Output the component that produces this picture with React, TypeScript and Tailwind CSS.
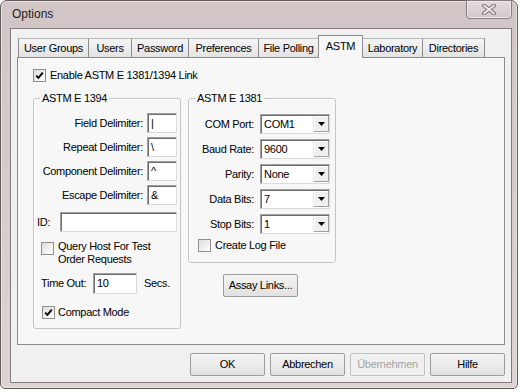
import React from "react";

const font = "font-['Liberation_Sans',Arial,sans-serif]";

// sunken 3D edit box
function Field({ value, className }: { value: string; className: string }) {
  return (
    <div
      className={`h-[20px] border border-t-[#a0a0a0] border-l-[#a0a0a0] border-r-[#dadada] border-b-[#dadada] shadow-[inset_1px_1px_0_#6e6e6e] bg-white text-[11px] tracking-[-0.3px] text-black pl-[3px] flex items-center leading-none ${className}`}
    >
      {value}
    </div>
  );
}

function Combo({ value }: { value: string }) {
  return (
    <div className="h-[20px] w-[70px] border border-t-[#a0a0a0] border-l-[#a0a0a0] border-r-[#dadada] border-b-[#dadada] shadow-[inset_1px_1px_0_#6e6e6e] bg-white flex items-stretch">
      <div className="flex-1 flex items-center pl-[3px] text-[11px] tracking-[-0.3px] text-black leading-none">
        {value}
      </div>
      {/* dropdown button */}
      <div className="w-[16px] my-[1px] mr-[0px] bg-[#f0f0f0] border-l border-[#e8e8e8] shadow-[inset_-1px_-1px_0_#a0a0a0,inset_1px_1px_0_#ffffff] flex items-center justify-center">
        <svg width="7" height="4" viewBox="0 0 7 4">
          <path d="M0 0 H7 L3.5 4 Z" fill="#000" />
        </svg>
      </div>
    </div>
  );
}

function Check({ checked }: { checked?: boolean }) {
  return (
    <span className="w-[13px] h-[13px] shrink-0 border border-[#8e8f8f] bg-gradient-to-br from-[#dedede] to-[#ffffff] flex items-center justify-center">
      {checked && (
        <svg width="9" height="9" viewBox="0 0 9 9">
          <path d="M1.2 4.6 L3.4 6.9 L7.8 1.6" fill="none" stroke="#000" strokeWidth="1.9" />
        </svg>
      )}
    </span>
  );
}

function Group({ title, className, children }: { title: string; className: string; children: React.ReactNode }) {
  return (
    <div className={`relative border border-[#c5c5c5] rounded-[3px] shadow-[inset_1px_1px_0_#ffffff] ${className}`}>
      <span className="absolute -top-[7px] left-[6px] px-[2px] bg-[#f7f7f7] text-[11px] tracking-[-0.3px] leading-[13px] text-black">
        {title}
      </span>
      {children}
    </div>
  );
}

function Button({ label, disabled, className }: { label: string; disabled?: boolean; className?: string }) {
  return (
    <div
      className={`w-[75px] h-[23px] rounded-[2px] border flex items-center justify-center text-[11px] tracking-[-0.3px] ${
        disabled
          ? "border-[#c2c2c2] bg-[#f0f0f0] text-[#a3a3a3]"
          : "border-[#9c9c9c] bg-gradient-to-b from-[#f4f4f4] to-[#e1e1e1] text-black"
      } ${className ?? ""}`}
    >
      {label}
    </div>
  );
}

const tabs = [
  { label: "User Groups", w: "w-[71px]", first: true },
  { label: "Users", w: "w-[43px]" },
  { label: "Password", w: "w-[57px]" },
  { label: "Preferences", w: "w-[70px]" },
  { label: "File Polling", w: "w-[60px]" },
  { label: "ASTM", w: "w-[45px]", active: true },
  { label: "Laboratory", w: "w-[60px]" },
  { label: "Directories", w: "w-[62px]" },
];

const delimiters = [
  { label: "Field Delimiter:", value: "|" },
  { label: "Repeat Delimiter:", value: "\\" },
  { label: "Component Delimiter:", value: "^" },
  { label: "Escape Delimiter:", value: "&" },
];

const serial = [
  { label: "COM Port:", value: "COM1" },
  { label: "Baud Rate:", value: "9600" },
  { label: "Parity:", value: "None" },
  { label: "Data Bits:", value: "7" },
  { label: "Stop Bits:", value: "1" },
];

export default function App() {
  return (
    <div className={`w-[523px] h-[392px] bg-white ${font}`}>
      {/* window frame */}
      <div className="w-[518px] h-[389px] rounded-t-[7px] rounded-b-[5px] border border-[#645b5b] bg-gradient-to-b from-[#d1c5c5] to-[#dcd3d3] shadow-[inset_0_0_0_1px_#ebe5e5] flex flex-col">
        {/* title bar */}
        <div className="h-[27px] flex items-start">
          <span className="pl-[11px] pt-[6px] text-[12px] leading-[14px] text-[#1e1e1e]">Options</span>
          <div className="ml-auto mr-[5px] -mt-px w-[46px] h-[19px] rounded-b-[4px] border border-[#8a7d7d] bg-gradient-to-b from-[#e4dcdc] to-[#d3c8c8] shadow-[inset_0_0_0_1px_#eee8e8] flex items-center justify-center">
            <svg width="14" height="11" viewBox="0 0 14 11">
              <path d="M2 1.5 L12 9.5 M12 1.5 L2 9.5" stroke="#7d7474" strokeWidth="4" strokeLinecap="round" />
              <path d="M2 1.5 L12 9.5 M12 1.5 L2 9.5" stroke="#efeaea" strokeWidth="2" strokeLinecap="round" />
            </svg>
          </div>
        </div>

        {/* client area */}
        <div className="ml-[9px] mr-[5px] h-[355px] border border-[#857b7b] bg-[#f0f0f0] flex flex-col">
          {/* tab strip */}
          <div className="mt-[6px] h-[22px] pl-[7px] flex items-end">
            {tabs.map((t) =>
              t.active ? (
                <div
                  key={t.label}
                  className={`${t.w} relative z-10 -ml-px -mb-px h-[23px] border border-b-0 border-[#8c8c8c] bg-[#f7f7f7] flex items-center justify-center pb-[2px] text-[11px] tracking-[-0.3px] text-black`}
                >
                  {t.label}
                </div>
              ) : (
                <div
                  key={t.label}
                  className={`${t.w} h-[19px] border-t border-r border-t-[#b8b8b8] border-r-[#8c8c8c] ${
                    t.first ? "border-l border-l-[#8c8c8c]" : ""
                  } bg-gradient-to-b from-[#f5f5f5] to-[#e3e3e3] flex items-center justify-center text-[11px] tracking-[-0.3px] text-black`}
                >
                  {t.label}
                </div>
              )
            )}
          </div>

          {/* tab page */}
          <div className="ml-[6px] w-[488px] h-[288px] border border-[#8c8c8c] bg-[#f7f7f7] pl-[15px] pt-[11px]">
            <div className="flex items-center gap-[4px] h-[13px] text-[11px] tracking-[-0.3px] text-black">
              <Check checked />
              <span>Enable ASTM E 1381/1394 Link</span>
            </div>

            <div className="mt-[16px] flex items-start">
              {/* ASTM E 1394 */}
              <Group title="ASTM E 1394" className="w-[148px] h-[231px] pt-[14px]">
                <div className="flex flex-col gap-[4px] pr-[3px]">
                  {delimiters.map((d) => (
                    <div key={d.label} className="h-[20px] flex items-center justify-end text-[11px] tracking-[-0.3px] text-black">
                      <span className="pr-[4px]">{d.label}</span>
                      <Field value={d.value} className="w-[30px]" />
                    </div>
                  ))}
                </div>

                <div className="mt-[7px] pl-[3px] h-[20px] flex items-center text-[11px] tracking-[-0.3px] text-black">
                  <span className="w-[23px]">ID:</span>
                  <Field value="" className="w-[117px]" />
                </div>

                <div className="mt-[8px] pl-[7px] flex items-start gap-[4px] text-[11px] tracking-[-0.3px] leading-[13px] text-black">
                  <span className="mt-[2px]">
                    <Check />
                  </span>
                  <span>
                    Query Host For Test
                    <br />
                    Order Requests
                  </span>
                </div>

                <div className="mt-[7px] pl-[7px] h-[21px] flex items-center text-[11px] tracking-[-0.3px] text-black">
                  <span className="w-[52px]">Time Out:</span>
                  <Field value="10" className="w-[44px] h-[21px]" />
                  <span className="ml-[7px]">Secs.</span>
                </div>

                <div className="mt-[12px] pl-[8px] flex items-center gap-[3px] h-[13px] text-[11px] tracking-[-0.3px] text-black">
                  <Check checked />
                  <span>Compact Mode</span>
                </div>
              </Group>

              <div className="ml-[7px] flex flex-col">
                {/* ASTM E 1381 */}
                <Group title="ASTM E 1381" className="w-[148px] h-[165px] pt-[15px]">
                  <div className="flex flex-col gap-[5px] pr-[5px]">
                    {serial.map((s) => (
                      <div key={s.label} className="h-[20px] flex items-center justify-end text-[11px] tracking-[-0.3px] text-black">
                        <span className="pr-[6px]">{s.label}</span>
                        <Combo value={s.value} />
                      </div>
                    ))}
                  </div>
                  <div className="mt-[5px] pl-[9px] flex items-center gap-[4px] h-[13px] text-[11px] tracking-[-0.3px] text-black">
                    <Check />
                    <span>Create Log File</span>
                  </div>
                </Group>

                <Button label="Assay Links..." className="mt-[11px] ml-[35px]" />
              </div>
            </div>
          </div>

          {/* dialog buttons */}
          <div className="mt-[8px] mr-[6px] flex justify-end gap-[5px]">
            <Button label="OK" />
            <Button label="Abbrechen" />
            <Button label="Übernehmen" disabled />
            <Button label="Hilfe" />
          </div>
        </div>
      </div>
    </div>
  );
}
